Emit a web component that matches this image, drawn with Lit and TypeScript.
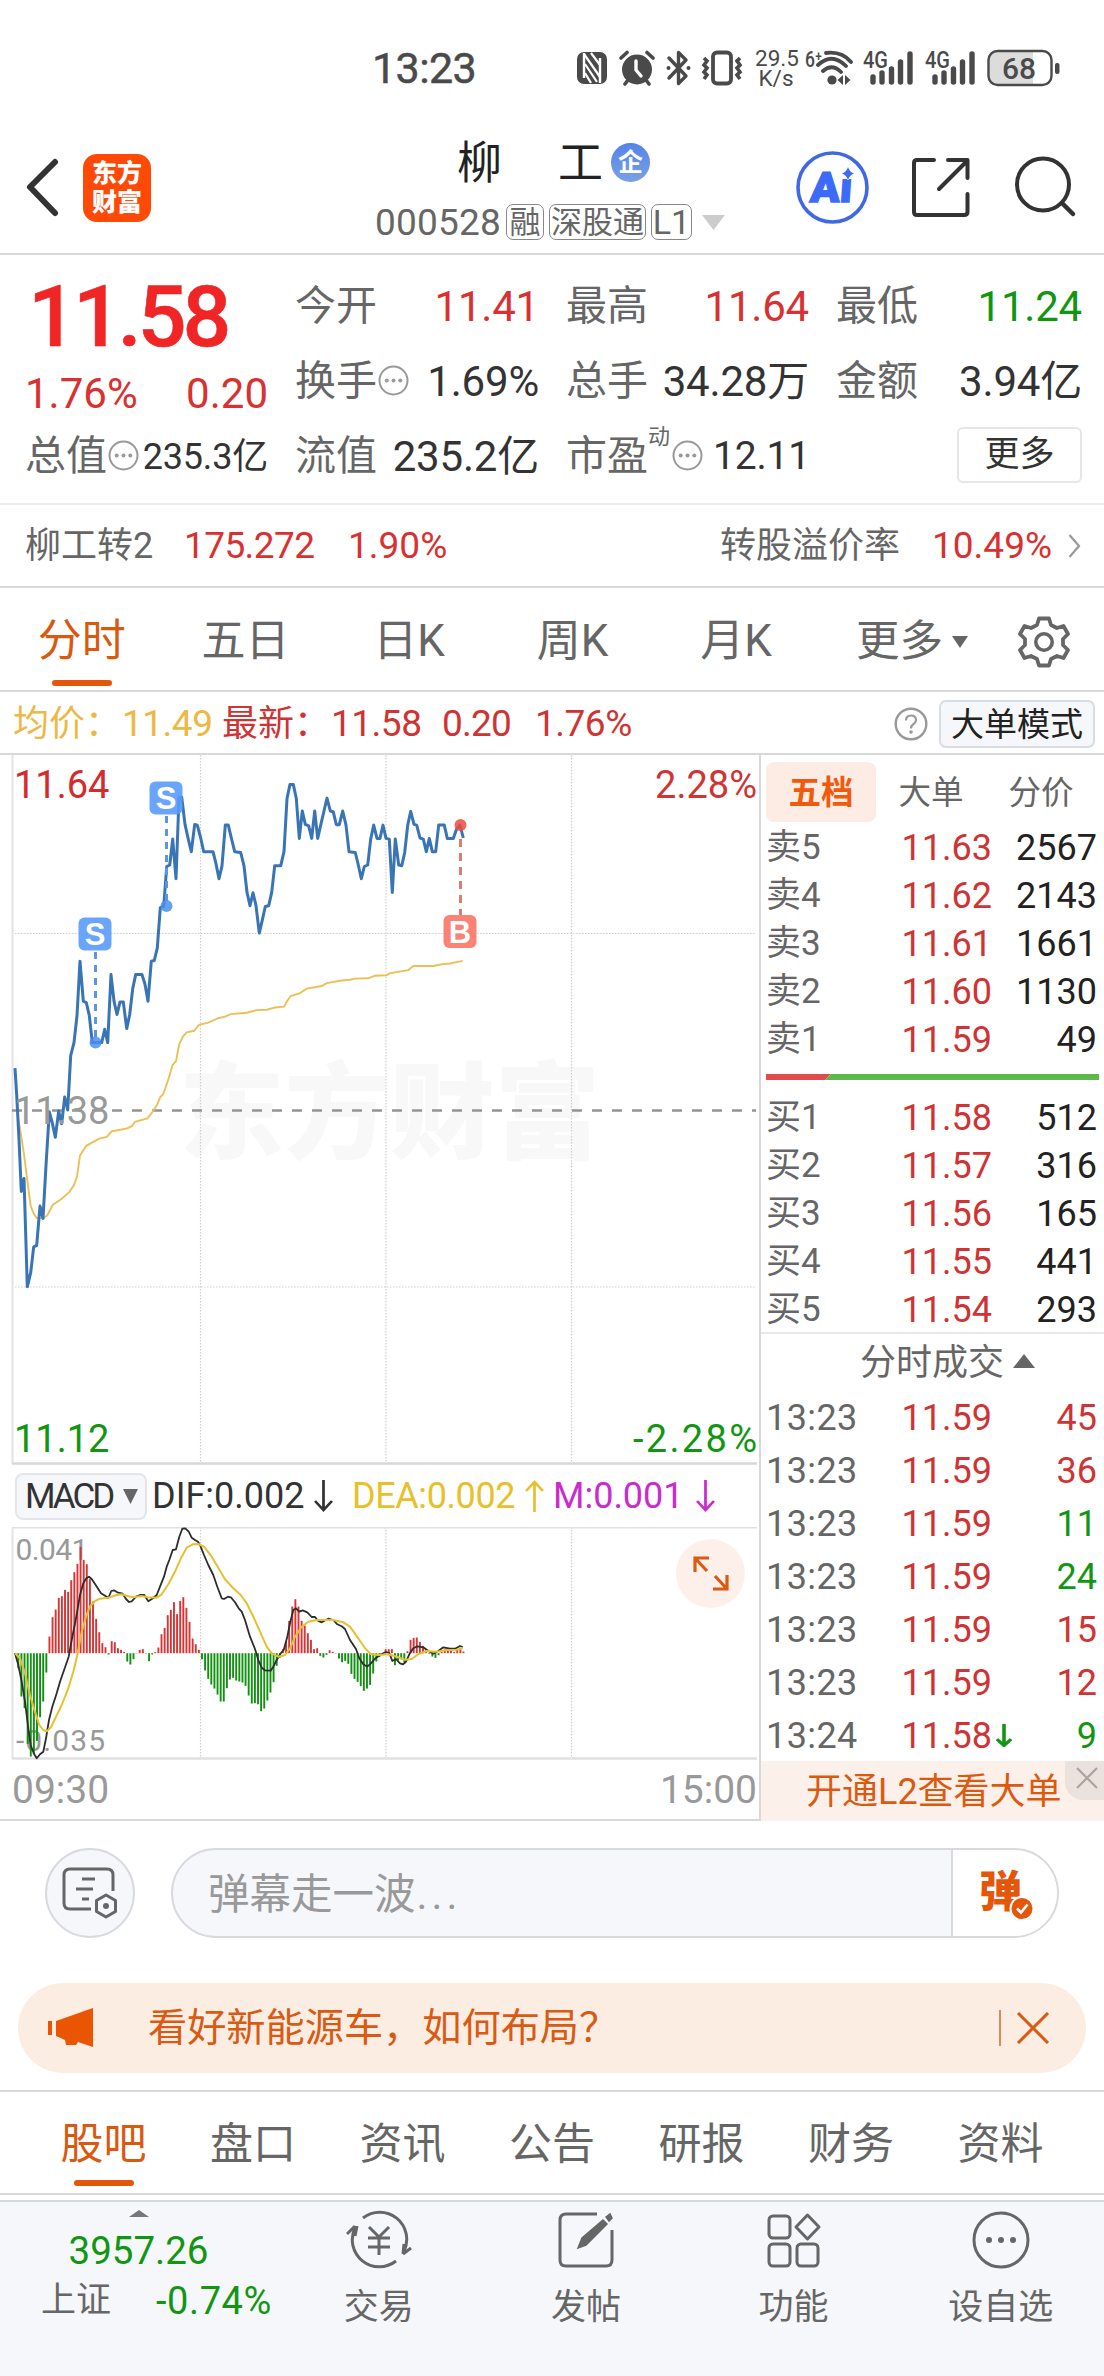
import { LitElement, html, css, svg } from "lit";
import { customElement } from "lit/decorators.js";
import { classMap } from "lit/directives/class-map.js";

const PRICE =
  "45,887 50,960 57,1080 64,1220 72,1185 82,1478 92,1440 101,1370 110,1366 120,1260 129,1293 138,1150 148,1005 157,1035 166,1074 176,1003 185,1037 194,965 203,1000 212,853 222,818 231,745 240,598 250,706 259,710 268,745 277,818 305,818 314,782 323,818 333,634 342,706 351,742 360,708 370,708 380,780 389,742 398,672 407,634 426,634 435,660 444,706 454,598 463,596 472,562 481,453 491,450 500,342 509,338 518,268 528,375 537,155 545,155 555,228 564,265 574,302 584,228 592,230 602,265 611,302 639,302 648,335 657,375 666,340 676,230 685,230 694,265 704,302 722,304 732,340 741,412 750,448 759,413 768,448 778,522 787,487 796,450 806,448 815,412 824,340 842,340 852,302 861,158 870,120 880,120 889,158 898,266 907,192 916,228 926,232 935,266 944,192 953,266 962,230 972,192 981,157 991,192 1000,194 1009,229 1018,229 1028,192 1038,230 1047,302 1066,304 1075,338 1084,375 1093,342 1103,338 1112,268 1121,230 1131,266 1140,266 1149,230 1158,266 1168,268 1177,412 1186,268 1196,338 1205,340 1214,304 1223,230 1232,193 1242,228 1250,230 1260,265 1270,268 1279,302 1288,266 1297,302 1307,302 1316,230 1333,230 1342,266 1360,266 1370,240 1380,230 1390,265";
const AVERAGE =
  "52,1010 60,1050 72,1120 82,1190 92,1260 101,1280 110,1292 130,1293 142,1285 158,1257 185,1240 208,1222 222,1203 231,1180 240,1123 259,1097 296,1078 320,1073 335,1058 380,1050 396,1043 405,1032 442,1023 454,1010 472,985 481,965 490,957 504,920 518,878 528,868 538,822 550,800 560,790 582,786 597,770 625,764 655,752 675,748 692,741 740,737 770,730 800,729 825,723 852,721 862,705 872,692 900,684 920,672 965,665 980,657 1025,650 1050,648 1065,645 1105,644 1125,637 1160,636 1168,631 1225,622 1240,611 1300,611 1325,606 1350,604 1388,597";
const DIF =
  "45,415 55,450 65,500 75,560 85,640 92,690 101,715 110,730 120,718 130,710 138,670 147,615 157,575 170,535 180,500 194,460 206,425 215,375 228,310 240,240 250,205 259,190 267,185 275,192 287,210 303,235 313,241 325,249 334,228 342,226 352,232 368,236 378,252 387,261 395,259 408,245 420,240 433,240 445,259 452,254 460,249 470,240 480,215 492,185 500,155 508,135 518,105 528,103 538,65 547,41 556,40 566,50 575,68 585,75 594,80 601,92 612,120 625,150 640,180 652,215 665,250 672,252 684,245 694,248 705,262 716,280 725,290 735,315 750,365 765,402 775,435 785,458 795,466 812,467 820,455 830,435 842,415 851,405 862,365 870,325 880,285 888,280 898,290 908,286 922,292 935,306 945,306 955,318 965,322 985,311 1000,315 1012,328 1025,334 1035,342 1050,375 1068,402 1078,430 1090,448 1102,455 1112,446 1124,432 1140,419 1158,411 1168,414 1177,438 1188,432 1200,445 1209,448 1218,440 1228,418 1240,400 1252,394 1270,397 1285,408 1300,416 1315,408 1330,397 1350,401 1365,401 1380,393 1388,396";
const DEA =
  "45,415 60,430 75,475 90,540 105,590 118,630 130,645 140,649 152,638 165,612 185,570 205,520 220,470 232,420 245,350 258,305 270,275 285,258 300,251 325,248 350,240 365,238 385,244 400,247 425,243 445,247 470,248 485,238 505,208 525,170 545,125 560,98 578,88 595,87 612,95 635,125 655,158 675,193 700,220 722,240 740,265 760,305 780,350 800,395 815,415 835,425 855,420 870,400 885,365 905,335 925,320 950,315 1000,315 1030,322 1050,335 1075,370 1095,400 1112,417 1135,420 1165,418 1190,425 1215,434 1235,432 1255,418 1280,408 1310,410 1340,405 1370,404 1388,399";
const BARS = [
  -2, -45, -130, -165, -272, -310, -300, -263, -192, -145, -58, 50, 108, 131, 166, 171, 190, 184, 219, 243, 268, 319, 280, 267, 222, 155, 103, 63, 30,
  18, -4, 36, 33, 15, 10, 4, -25, -34, -18, -1, 10, 12, -1, -24, -4, 3, 17, 57, 76, 114, 130, 153, 117, 157, 168, 136, 94, 44, 27, 10, -18, -52, -77,
  -94, -106, -124, -145, -145, -105, -79, -74, -82, -85, -88, -98, -127, -151, -150, -153, -174, -166, -142, -118, -87, -38, -14, 12, 36, 97, 140, 162,
  140, 97, 83, 60, 40, 12, 15, -8, -13, -5, 9, 4, -1, -16, -27, -23, -32, -62, -77, -86, -99, -113, -106, -95, -61, -25, -12, -3, 12, 12, 12, -36, -22,
  -18, -27, 6, 40, 46, 47, 34, 22, 12, -2, -10, -14, -6, 4, 12, 14, 12, 4, 12, 12, 5,
];

/** Converts a point list to chart pixels. */
const scale = (pts: string, sx: number, sy: number, dx: number, dy: number) =>
  pts
    .split(" ")
    .map((p) => {
      const [x, y] = p.split(",").map(Number);
      return `${(x * sx + dx).toFixed(1)},${(y * sy + dy).toFixed(1)}`;
    })
    .join(" ");

const priceLine = scale(PRICE, 1 / 3, 1 / 2.703, -12, -15);
const averageLine = scale(AVERAGE, 1 / 3, 1 / 2.703, -12, -15);
const difLine = scale(DIF, 1 / 3, 1 / 3, -12, -12);
const deaLine = scale(DEA, 1 / 3, 1 / 3, -12, -12);

const arrow = (up: boolean, w: number, h: number, sw = 2.6) => html`<svg width=${w} height=${h} viewBox="0 0 18 32" preserveAspectRatio="none">
  <path d=${up ? "M9 32V2M1 11L9 2L17 11" : "M9 0V30M1 21L9 30L17 21"} fill="none" stroke="currentColor" stroke-width=${sw} />
</svg>`;

const dots = html`<svg class="dots" width="31" height="31" viewBox="0 0 31 31">
  <circle cx="15.5" cy="15.5" r="14" fill="none" stroke="#999" stroke-width="2" />
  <circle cx="8.7" cy="15.5" r="2" fill="#999" /><circle cx="15.5" cy="15.5" r="2" fill="#999" /><circle cx="22.3" cy="15.5" r="2" fill="#999" />
</svg>`;

const signal = html`<svg width="51" height="38" viewBox="0 0 51 38">
  <text x="0" y="19" font-size="23" font-weight="500" textLength="25" lengthAdjust="spacingAndGlyphs" fill="#4a4a4a">4G</text>
  <g stroke="#4a4a4a" stroke-width="5.400" stroke-linecap="round"><path d="M10 28V33M19 24V33M28.500 20V33M37.500 13V33M47 5V33" /></g>
</svg>`;

@customElement("status-bar")
class StatusBar extends LitElement {
  static styles = css`
    :host { display: flex; height: 136px; align-items: center; color: #4a4a4a; }
    .time { width: 205px; padding-left: 372px; font-size: 43px; font-weight: 400; letter-spacing: -0.6px; -webkit-text-stroke: 0.5px #4a4a4a; }
    .icons { display: grid; grid-template-columns: 42px 47px 35px 54px 50px 58px 62px 62px 74px; align-items: center; }
    .speed { display: flex; flex-direction: column; font-size: 22.5px; line-height: 20px; text-align: center; width: 42px; }
    svg { display: block; }
  `;
  render() {
    return html`
      <span class="time">13:23</span>
      <div class="icons">
        <svg width="30" height="34" viewBox="0 0 30 34">
          <rect x="0" y="1" width="30" height="32" rx="7" fill="#4a4a4a" />
          <path d="M7 2V27M23 7V32" stroke="#fff" stroke-width="2.400" />
          <path d="M7 3L23 26M8 13L20 31M8 22L14 32M14 2L23 14" stroke="#fff" stroke-width="2.200" />
        </svg>
        <svg width="36" height="36" viewBox="0 0 36 36">
          <circle cx="18" cy="19.500" r="15" fill="#4a4a4a" />
          <path d="M2 8L8 2.500M34 8L28 2.500M6 34L9 30M30 34L27 30" stroke="#4a4a4a" stroke-width="3.600" stroke-linecap="round" />
          <path d="M17 11V20L22 26" stroke="#fff" stroke-width="3.400" fill="none" stroke-linecap="round" />
        </svg>
        <svg width="25" height="36" viewBox="0 0 25 36">
          <path d="M3 8L20 26L12.500 33.500V2.500L20 10L3 28" fill="none" stroke="#4a4a4a" stroke-width="3.400" stroke-linejoin="round" stroke-linecap="round" />
          <circle cx="2.500" cy="18" r="2" fill="#4a4a4a" /><circle cx="22.500" cy="18" r="2" fill="#4a4a4a" />
        </svg>
        <svg width="42" height="36" viewBox="0 0 42 36">
          <rect x="12" y="2.500" width="18" height="31" rx="4" fill="none" stroke="#4a4a4a" stroke-width="3.800" />
          <path d="M3 8L6 11L3 15L6 18L3 22L6 25L3 29M39 8L36 11L39 15L36 18L39 22L36 25L39 29" fill="none" stroke="#4a4a4a" stroke-width="3.600" />
        </svg>
        <div class="speed"><span>29.5</span><span>K/s</span></div>
        <svg width="50" height="38" viewBox="0 0 50 38">
          <text x="0" y="18" font-size="22" font-weight="500" textLength="17" lengthAdjust="spacingAndGlyphs" fill="#4a4a4a">6⁺</text>
          <g fill="none" stroke="#4a4a4a" stroke-width="3.800" stroke-linecap="round"><path d="M21 4Q37 2 46 13M13 16Q27 3 41 17M18 22Q27 14 36 23" /></g>
          <circle cx="27" cy="31" r="4.600" fill="#4a4a4a" />
          <path d="M38 26V36L32.500 31ZM40 26V36L45.500 31Z" fill="#4a4a4a" />
        </svg>
        ${signal}${signal}
        <svg width="74" height="38" viewBox="0 0 74 38">
          <path d="M10 2H46V36H10Q2 36 2 28V10Q2 2 10 2Z" fill="#dcdcdc" />
          <rect x="1.500" y="2" width="63" height="34" rx="9" fill="none" stroke="#4a4a4a" stroke-width="2.400" />
          <rect x="68" y="14" width="4.500" height="11" rx="2" fill="#4a4a4a" />
          <text x="32" y="29.500" font-size="30" font-weight="500" text-anchor="middle" fill="#4a4a4a">68</text>
        </svg>
      </div>
    `;
  }
}

@customElement("title-bar")
class TitleBar extends LitElement {
  static styles = css`
    :host { display: grid; grid-template-columns: 59px 68px 224px 421px 116px 101px 67px; padding-left: 24px; border-bottom: 2px solid #d8d8d8; box-sizing: border-box; height: 119px; }
    svg { display: block; margin-top: 15px; }
    .logo { margin-top: 18px; width: 68px; height: 68px; border-radius: 14px; background: #ff4a07; color: #fff; font-size: 25px; line-height: 29px; font-weight: 900; text-align: center; padding-top: 5px; box-sizing: border-box; }
    .mid { grid-column: 4; }
    .name { display: flex; align-items: center; height: 54px; padding-left: 82px; font-size: 45px; color: #222; gap: 56px; }
    .badge { margin: -2px 0 0 -48px; width: 39px; height: 39px; border-radius: 50%; background: linear-gradient(#5483ea, #7ba0e2); color: #fff; font-size: 25px; font-weight: 700; line-height: 39px; text-align: center; }
    .code { display: flex; align-items: center; height: 64px; font-size: 37px; color: #666; }
    .num { width: 131px; letter-spacing: 0.2px; }
    .tag { border: 1.5px solid #888; border-radius: 7px; height: 36px; box-sizing: border-box; line-height: 35px; font-size: 31px; text-align: center; margin-right: 5px; width: 38px; }
    .tag.wide { width: 97px; }
    .tag.l1 { width: 41px; margin-right: 10px; font-size: 34px; line-height: 34px; }
    .tri { margin: 0; }
  `;
  render() {
    return html`
      <svg width="40" height="72" viewBox="0 0 40 72"><path d="M31 11L6 36L31 62" fill="none" stroke="#333" stroke-width="6" stroke-linecap="round" stroke-linejoin="round" /></svg>
      <div class="logo">东方<br />财富</div>
      <div class="mid">
        <div class="name"><span>柳</span><span>工</span><span class="badge">企</span></div>
        <div class="code">
          <span class="num">000528</span><span class="tag">融</span><span class="tag wide">深股通</span><span class="tag l1">L1</span>
          <svg class="tri" width="23" height="15"><path d="M0 0H23L11.500 15Z" fill="#ccc" /></svg>
        </div>
      </div>
      <svg width="73" height="73" viewBox="0 0 73 73">
        <circle cx="36.500" cy="36.500" r="34.500" fill="none" stroke="#4068e4" stroke-width="3.600" />
        <text x="14" y="51" font-size="42" font-weight="900" fill="#3c6bfa" stroke="#3c6bfa" stroke-width="1.500" textLength="42" lengthAdjust="spacingAndGlyphs" transform="skewX(-4) translate(3 0)">Aı</text>
        <path d="M52 16Q53.500 21 58 22.500Q53.500 24 52 29Q50.500 24 46 22.500Q50.500 21 52 16Z" fill="#3c6bfa" stroke="#fff" stroke-width="1" paint-order="stroke" />
      </svg>
      <svg width="60" height="73" viewBox="0 0 60 73">
        <path d="M22 9H5Q2 9 2 12V61Q2 64 5 64H52Q55.500 64 55.500 61V43M36 9H55.500V27M55 10L27 38" fill="none" stroke="#333" stroke-width="4" stroke-linecap="round" stroke-linejoin="round" />
      </svg>
      <svg width="64" height="73" viewBox="0 0 64 73"><circle cx="30" cy="33.500" r="26" fill="none" stroke="#333" stroke-width="4" /><path d="M49 52L60 63" stroke="#333" stroke-width="4.500" stroke-linecap="round" /></svg>
    `;
  }
}

@customElement("quote-panel")
class QuotePanel extends LitElement {
  static styles = css`
    :host { display: block; }
    .grid { display: grid; grid-template-columns: 243px 244px 243px 246px; column-gap: 27px; height: 250px; box-sizing: border-box; padding: 14px 23px 0 25px; border-bottom: 2px solid #ededed; }
    .cell { display: flex; align-items: center; justify-content: space-between; height: 75px; font-size: 42px; color: #333; white-space: nowrap; }
    .label { display: flex; align-items: center; font-size: 41px; color: #666; }
    .v { letter-spacing: -0.2px; }
    .red { color: #d93031; }
    .green { color: #119612; }
    .big { height: 100px; line-height: 96px; font-size: 86px; font-weight: 500; color: #f02525; letter-spacing: -4px; padding-left: 3px; -webkit-text-stroke: 0.6px #f02525; }
    .chg { height: 50px; }
    .dots { margin-left: 1px; margin-top: -3px; }
    .mid { font-size: 36px; }
    .pe { font-size: 39px; margin-right: -1px; }
    .sup { font-size: 22px; align-self: flex-start; margin-top: -10px; width: 23px; }
    .more { margin: -3px 0 0 auto; width: 125px; height: 56px; box-sizing: border-box; border: 2px solid #e6e6e6; border-radius: 6px; line-height: 52px; text-align: center; font-size: 35px; }
    .bond { display: flex; align-items: center; height: 83px; padding: 0 23px 0 25px; font-size: 36px; color: #666; border-bottom: 2px solid #d8d8d8; box-sizing: border-box; white-space: nowrap; }
    .b1 { width: 159px; } .b2 { width: 164px; letter-spacing: -0.6px; } .b3 { flex: 1; } .b4 { width: 212px; } .b5 { width: 136px; }
    .b2, .b3, .b5 { font-size: 37px; }
  `;
  render() {
    const cell = (l: unknown, v: string, c = "") => html`<div class="cell"><span class="label">${l}</span><span class="v ${c}">${v}</span></div>`;
    return html`
      <div class="grid">
        <div>
          <div class="big">11.58</div>
          <div class="cell chg red"><span>1.76%</span><span>0.20</span></div>
          ${cell(html`总值${dots}`, "235.3亿", "mid")}
        </div>
        <div>${cell("今开", "11.41", "red")}${cell(html`换手${dots}`, "1.69%")}${cell("流值", "235.2亿")}</div>
        <div>${cell("最高", "11.64", "red")}${cell("总手", "34.28万")}${cell(html`市盈<span class="sup">动</span>${dots}`, "12.11", "pe")}</div>
        <div>${cell("最低", "11.24", "green")}${cell("金额", "3.94亿")}<div class="cell"><span class="more">更多</span></div></div>
      </div>
      <div class="bond">
        <span class="b1">柳工转2</span><span class="b2 red">175.272</span><span class="b3 red">1.90%</span><span class="b4">转股溢价率</span><span class="b5 red">10.49%</span>
        <svg width="13" height="24" viewBox="0 0 13 24"><path d="M1.500 1L11 12L1.500 23" fill="none" stroke="#999" stroke-width="2.200" /></svg>
      </div>
    `;
  }
}

@customElement("period-tabs")
class PeriodTabs extends LitElement {
  static styles = css`
    :host { display: block; }
    .tabs { display: grid; grid-template-columns: repeat(5, 163.6px) 1fr; height: 104px; box-sizing: border-box; border-bottom: 2px solid #d8d8d8; font-size: 44px; color: #666; }
    .tab { display: flex; flex-direction: column; align-items: center; height: 102px; line-height: 107px; position: relative; }
    .on { color: #d9590f; }
    .on::after { content: ""; position: absolute; bottom: 4px; width: 60px; height: 6px; border-radius: 3px; background: #e4570b; }
    .end { display: flex; align-items: center; padding: 3px 0 0 38px; box-sizing: border-box; font-size: 43.5px; height: 104px; }
    .tri { margin: 0 50px 0 9px; }
    .info { display: flex; align-items: center; height: 63px; box-sizing: border-box; border-bottom: 2px solid #d8d8d8; padding: 2px 9px 0 13px; font-size: 37px; white-space: nowrap; color: #d03334; }
    .lab { font-size: 36px; width: 109px; }
    .avg { color: #edb846; }
    .a { width: 100px; letter-spacing: -0.5px; } .b { width: 111px; letter-spacing: -0.5px; } .c { width: 93px; letter-spacing: -0.8px; } .d { flex: 1; letter-spacing: -0.5px; }
    .mode { width: 156px; height: 48px; box-sizing: border-box; border: 2px solid #d9dce2; border-radius: 7px; background: #f6f7fa; color: #222; font-size: 33px; line-height: 45px; text-align: center; margin-left: 11px; }
  `;
  render() {
    return html`
      <div class="tabs">
        ${["分时", "五日", "日K", "周K", "月K"].map((t, i) => html`<span class=${classMap({ tab: true, on: i === 0 })}>${t}</span>`)}
        <span class="end">更多
          <svg class="tri" width="16" height="12"><path d="M0 0H16L8 12Z" fill="#666" /></svg>
          <svg width="52" height="52" viewBox="-26 -26 52 52">
            <path d="M-5 -23.500H5L7 -17L13 -14L19.500 -16L24 -8L19 -3V3L24 8L19.500 16L13 14L7 17L5 23.500H-5L-7 17L-13 14L-19.500 16L-24 8L-19 3V-3L-24 -8L-19.500 -16L-13 -14L-7 -17Z" fill="none" stroke="#666" stroke-width="3.800" stroke-linejoin="round" />
            <circle r="8.200" fill="none" stroke="#666" stroke-width="3.600" />
          </svg>
        </span>
      </div>
      <div class="info">
        <span class="lab avg">均价：</span><span class="a avg">11.49</span><span class="lab">最新：</span><span class="b">11.58</span><span class="c">0.20</span><span class="d">1.76%</span>
        <svg width="34" height="34" viewBox="0 0 34 34"><circle cx="17" cy="17" r="15.300" fill="none" stroke="#999" stroke-width="2.400" /><path d="M12 13.500Q12 8.500 17 8.500T22 13.300Q22 15.500 19 17.500Q17 19 17 21.500" fill="none" stroke="#999" stroke-width="2.200" /><circle cx="17" cy="25" r="1.800" fill="#999" /></svg>
        <span class="mode">大单模式</span>
      </div>
    `;
  }
}

@customElement("minute-chart")
class MinuteChart extends LitElement {
  static styles = css`
    :host { display: block; width: 759px; box-sizing: border-box; }
    .plot { display: block; }
    .indicator { display: flex; align-items: center; height: 62px; padding-left: 15px; font-size: 36px; color: #333; white-space: nowrap; }
    .pick { display: flex; align-items: center; width: 132px; height: 47px; box-sizing: border-box; border: 2px solid #e3e5ea; border-radius: 8px; background: #f6f7fa; padding-left: 8px; margin-right: 5px; }
    .macd { font-size: 35px; letter-spacing: -3px; width: 98px; }
    .dif { display: flex; align-items: center; gap: 10px; width: 200px; }
    .dea { display: flex; align-items: center; gap: 10px; width: 201px; color: #e8c02b; letter-spacing: -0.4px; }
    .m { display: flex; align-items: center; gap: 12px; color: #ca2bce; }
    .axis { display: flex; justify-content: space-between; align-items: center; height: 59px; padding: 2px 2px 0 12px; box-sizing: border-box; font-size: 39px; color: #999; }
  `;
  render() {
    const grid = (h: number) => svg`<path d=${`M188.500 0V${h}M374 0V${h}M559.500 0V${h}`} stroke="#cfcfcf" stroke-width="1.200" stroke-dasharray="1.500 1.500" />`;
    const marker = (x: number, y: number, t: string, c: string) => svg`
      <rect x=${x} y=${y} width="33" height="33" rx="6" fill=${c} fill-opacity="0.9" />
      <text x=${x + 16.5} y=${y + 27.5} font-size="31" font-weight="700" font-family="Liberation Sans, sans-serif" fill="#fff" text-anchor="middle">${t}</text>`;
    return html`
      <svg class="plot" width="758" height="710" viewBox="-12 0 758 710">
        <text x="167" y="395" font-size="105" font-weight="900" fill="#f8f8f8" textLength="421">东方财富</text>
        ${grid(709)}
        <path d="M0 178.500H744M0 532H744" stroke="#cfcfcf" stroke-width="1.200" stroke-dasharray="1.500 1.500" />
        <path d="M0.500 0V709" stroke="#e3e3e3" stroke-width="2" /><path d="M0 708.500H745" stroke="#d8d8d8" stroke-width="2.500" />
        <path d="M0 355.500H744" stroke="#949494" stroke-width="2.400" stroke-dasharray="10 10" />
        <polyline points=${averageLine} fill="none" stroke="#ecc055" stroke-width="1.900" />
        <polyline points=${priceLine} fill="none" stroke="#3974b4" stroke-width="3" stroke-linejoin="round" />
        <text x="2" y="368.500" font-size="38" fill="#999">11.38</text>
        <text x="2" y="43" font-size="38" fill="#d42b2c">11.64</text>
        <text x="745" y="43" font-size="38" fill="#d03334" text-anchor="end">2.28%</text>
        <text x="2" y="697" font-size="38" fill="#119612">11.12</text>
        <text x="621" y="697" font-size="38" fill="#119612" textLength="124">-2.28%</text>
        <path d="M83.500 197V284M154.500 61V148" stroke="#5b95e6" stroke-width="3" stroke-dasharray="7 6" />
        <path d="M448.500 84V160" stroke="#e07b70" stroke-width="3" stroke-dasharray="8 6" />
        <circle cx="83.500" cy="287.500" r="6" fill="#4b8ff0" fill-opacity=".85" /><circle cx="154.500" cy="151" r="6" fill="#4b8ff0" fill-opacity=".85" /><circle cx="448.500" cy="70" r="6" fill="#ee4b3e" fill-opacity=".85" />
        ${marker(66.5, 162.5, "S", "#599bfb")}${marker(137.5, 26.5, "S", "#599bfb")}${marker(431.5, 160, "B", "#fb7566")}
      </svg>
      <div class="indicator">
        <span class="pick"><span class="macd">MACD</span><svg width="15" height="15"><path d="M0 0H15L7.500 15Z" fill="#666" /></svg></span>
        <span class="dif">DIF:0.002${arrow(false, 19, 32)}</span><span class="dea">DEA:0.002${arrow(true, 19, 32)}</span><span class="m">M:0.001${arrow(false, 19, 32)}</span>
      </div>
      <svg class="plot" width="758" height="233" viewBox="-12 0 758 233">
        ${grid(232)}
        <path d="M0 0.750H745" stroke="#e0e0e0" stroke-width="1.500" /><path d="M0.500 0V232" stroke="#e3e3e3" stroke-width="2" /><path d="M0 231.500H745" stroke="#e0e0e0" stroke-width="2.500" />
        <text x="3.500" y="32.500" font-size="30" fill="#999" letter-spacing="-0.600">0.041</text>
        <text x="4" y="223.500" font-size="30" fill="#999" textLength="89">-0.035</text>
        ${BARS.map((v, i) => svg`<rect x=${3.2 + i * 3.113 - 0.95} y=${126.2 - Math.max(v, 0) / 3} width="1.9" height=${Math.abs(v) / 3} fill=${v > 0 ? "#d83434" : "#129012"} />`)}
        <polyline points=${difLine} fill="none" stroke="#2d2d2d" stroke-width="1.800" stroke-linejoin="round" />
        <polyline points=${deaLine} fill="none" stroke="#e6c032" stroke-width="2" stroke-linejoin="round" />
        <circle cx="698.500" cy="46.500" r="34.500" fill="#fdf0ea" />
        <path d="M683 45V31H697M683 31L695 44M715 48V62H701M715 62L703 49" fill="none" stroke="#d95a12" stroke-width="3.200" />
      </svg>
      <div class="axis"><span>09:30</span><span>15:00</span></div>
    `;
  }
}

@customElement("order-book")
class OrderBook extends LitElement {
  static styles = css`
    :host { display: block; flex: 1; border-left: 2px solid #d8d8d8; box-sizing: border-box; font-size: 36px; color: #222; white-space: nowrap; }
    .tabs { display: flex; height: 74px; align-items: center; font-size: 32.5px; color: #666; padding: 0 0 0 5px; box-sizing: border-box; }
    .tab { width: 110px; height: 60px; line-height: 62px; text-align: center; border-radius: 8px; }
    .on { background: #fdece4; color: #f15a0c; font-weight: 700; }
    .row { display: grid; grid-template-columns: 100px 126px 1fr; height: 48px; align-items: center; padding: 0 7px 0 5px; }
    .row > * + * { text-align: right; }
    .l { color: #666; } .red { color: #d03334; } .green { color: #119612; }
    .l.book { font-size: 35px; line-height: 38px; }
    .bar { display: block; margin: 10px 0 14px 5px; }
    .sells { margin-top: -5px; }
    .head { display: flex; height: 60px; margin-top: -2px; box-sizing: border-box; border-top: 2px solid #e8e8e8; justify-content: center; align-items: center; gap: 9px; padding-left: 30px; color: #666; }
    .head svg { margin-top: -5px; }
    .ticks { margin-top: -1px; }
    .tick { height: 53px; }
    .tick .l { letter-spacing: 0.4px; }
    .price { position: relative; }
    .price svg { position: absolute; left: 103%; top: 6px; color: #119612; }
    .l2 { display: flex; height: 60px; background: #fcf0ea; color: #dc5a10; margin-top: -1px; justify-content: space-between; padding-left: 45px; line-height: 62px; }
    .close { width: 39px; height: 39px; background: #ebe2de; border-radius: 0 0 0 18px; display: flex; align-items: center; justify-content: center; box-sizing: border-box; padding: 0 0 5px 5px; }
  `;
  render() {
    const rows = (side: string, data: [number, string, string][]) =>
      data.map(([n, p, q]) => html`<div class="row"><span class="l book">${side}${n}</span><span class="red">${p}</span><span>${q}</span></div>`);
    const ticks: [string, string, string, string][] = [
      ["13:23", "11.59", "45", "red"], ["13:23", "11.59", "36", "red"], ["13:23", "11.59", "11", "green"], ["13:23", "11.59", "24", "green"],
      ["13:23", "11.59", "15", "red"], ["13:23", "11.59", "12", "red"], ["13:24", "11.58", "9", "green"],
    ];
    return html`
      <div class="tabs"><span class="tab on">五档</span><span class="tab">大单</span><span class="tab">分价</span></div>
      <div class="sells">${rows("卖", [[5, "11.63", "2567"], [4, "11.62", "2143"], [3, "11.61", "1661"], [2, "11.60", "1130"], [1, "11.59", "49"]])}</div>
      <svg class="bar" width="333" height="6"><path d="M0 0H65L59 6H0Z" fill="#e14b4e" /><path d="M65 0H333V6H59Z" fill="#5fb84b" /></svg>
      ${rows("买", [[1, "11.58", "512"], [2, "11.57", "316"], [3, "11.56", "165"], [4, "11.55", "441"], [5, "11.54", "293"]])}
      <div class="head">分时成交<svg width="22" height="14"><path d="M0 14L11 0L22 14Z" fill="#666" /></svg></div>
      <div class="ticks">
        ${ticks.map(([t, p, q, c], i) => html`<div class="row tick"><span class="l">${t}</span><span class="price"><span class="red">${p}</span>${i === 6 ? arrow(false, 16, 23, 4) : ""}</span><span class=${c}>${q}</span></div>`)}
      </div>
      <div class="l2">开通L2查看大单<span class="close"><svg width="22" height="22"><path d="M1 1L21 21M21 1L1 21" stroke="#aaa3a0" stroke-width="2.200" /></svg></span></div>
    `;
  }
}

@customElement("comment-area")
class CommentArea extends LitElement {
  static styles = css`
    :host { display: block; border-top: 2px solid #d8d8d8; }
    .say { display: flex; padding: 27px 45px 0; gap: 36px; }
    .set { width: 90px; height: 90px; box-sizing: border-box; border: 2px solid #d8dade; border-radius: 50%; background: #f6f7fa; display: flex; align-items: center; justify-content: center; }
    .field { flex: 1; display: flex; height: 90px; box-sizing: border-box; border: 2px solid #d8dade; border-radius: 45px; background: #f6f7fa; overflow: hidden; font-size: 41.5px; line-height: 89px; color: #999; }
    .hint { flex: 1; padding-left: 35px; }
    .ell { letter-spacing: 4px; margin-left: 1px; }
    .dan { width: 106px; border-left: 2px solid #d8dade; background: #fff; display: flex; align-items: center; padding-left: 26px; box-sizing: border-box; }
    .notice { display: flex; align-items: center; height: 90px; margin: 45px 18px 0; border-radius: 45px; background: #fcede3; color: #d95a12; font-size: 39.2px; line-height: 42px; padding: 0 36px 0 30px; box-sizing: border-box; }
    .msg { flex: 1; padding-left: 55px; }
    .sep { width: 2px; height: 36px; background: #d98a5e; margin-right: 15px; }
    .tabs { display: grid; grid-template-columns: repeat(7, 149.5px); justify-content: center; height: 105px; margin-top: 17px; box-sizing: border-box; border-top: 2px solid #d8d8d8; border-bottom: 2px solid #d8d8d8; font-size: 43px; color: #666; }
    .tab { display: flex; justify-content: center; line-height: 105px; position: relative; height: 101px; }
    .on { color: #d9590f; }
    .on::after { content: ""; position: absolute; bottom: 7px; width: 60px; height: 6px; border-radius: 3px; background: #e4570b; }
  `;
  render() {
    return html`
      <div class="say">
        <span class="set"><svg width="56" height="54" viewBox="0 0 56 54">
          <path d="M51 25V9Q51 3 45 3H8Q2 3 2 9V37Q2 43 8 43H29M20 13H33M14 23H31M20 33H27" fill="none" stroke="#666" stroke-width="3" />
          <path d="M44 29L53.500 34.500V45.500L44 51L34.500 45.500V34.500Z" fill="none" stroke="#666" stroke-width="3" stroke-linejoin="round" /><circle cx="44" cy="40" r="3" fill="#666" />
        </svg></span>
        <div class="field"><span class="hint">弹幕走一波<span class="ell">...</span></span><span class="dan"><svg width="56" height="56" viewBox="0 0 56 56">
          <text x="0" y="42" font-size="43" font-weight="900" fill="#e4570b">弹</text>
          <circle cx="43" cy="43.500" r="12.500" fill="#fff" /><circle cx="43" cy="43.500" r="10.500" fill="#e4570b" /><path d="M38 43.500L42 47.500L48.500 39.500" fill="none" stroke="#fff" stroke-width="2.600" />
        </svg></span></div>
      </div>
      <div class="notice">
        <svg width="45" height="40" viewBox="0 0 45 40"><path d="M0 13H4V27H0ZM8 13L45 0V39L30 34L28 37H18L17 32L8 28Z" fill="#ea5504" /></svg>
        <span class="msg">看好新能源车，如何布局？</span><span class="sep"></span>
        <svg width="34" height="32" viewBox="0 0 34 32"><path d="M2 1L32 31M32 1L2 31" stroke="#d95a12" stroke-width="3" /></svg>
      </div>
      <div class="tabs">${["股吧", "盘口", "资讯", "公告", "研报", "财务", "资料"].map((t, i) => html`<span class=${classMap({ tab: true, on: i === 0 })}>${t}</span>`)}</div>
    `;
  }
}

@customElement("bottom-bar")
class BottomBar extends LitElement {
  static styles = css`
    :host { display: grid; grid-template-columns: 275px repeat(4, 207.4px); height: 176px; margin-top: 5px; background: #f6f7fa; border-top: 2px solid #d8d8d8; box-sizing: border-box; color: #666; font-size: 35px; }
    .index { display: flex; flex-direction: column; align-items: center; padding: 8px 0 0 2px; }
    .v { font-size: 38.5px; color: #119612; line-height: 68px; }
    .sub { display: flex; align-self: stretch; padding: 0 3px 0 39px; justify-content: space-between; line-height: 32px; white-space: nowrap; }
    .neg { color: #119612; font-size: 38px; letter-spacing: 0.6px; }
    .item { display: flex; flex-direction: column; align-items: center; padding-top: 8px; line-height: 76px; }
    svg { display: block; flex: none; }
  `;
  render() {
    const item = (icon: unknown, t: string) => html`<div class="item"><svg width="66" height="60" viewBox="-33 -30 66 60" fill="none" stroke="#666" stroke-width="3">${icon}</svg>${t}</div>`;
    return html`
      <div class="index">
        <svg width="20" height="7"><path d="M0 7L10 0L20 7Z" fill="#777" /></svg>
        <span class="v">3957.26</span>
        <span class="sub"><span>上证</span><span class="neg">-0.74%</span></span>
      </div>
      ${item(svg`<path d="M-16 -22A27 27 0 0 1 25 11M17 21A27 27 0 0 1 -24 -12M24 14L32 8M25 4L24 14M-24 -14L-32 -6M-22 -14L-24 -4" /><path d="M-10 -13L0 -3L10 -13M0 -3V15M-11 -2H11M-11 7H11" />`, "交易")}
      ${item(svg`<path d="M11 -26H-20Q-26 -26 -26 -20V20Q-26 26 -20 26H20Q26 26 26 20V-10" /><path d="M-8 8L-4 -2L17 -20L21 -16L0 5Z M20 -23L24 -26L26 -22L23 -19Z" fill="#666" stroke-width="1.500" />`, "发帖")}
      ${item(svg`<rect x="-24" y="-24" width="21" height="22" rx="4" /><rect x="-24" y="4" width="21" height="22" rx="4" /><rect x="4" y="4" width="21" height="22" rx="4" /><path d="M14.500 -25L26 -13L14.500 -1L3 -13Z" stroke-linejoin="round" />`, "功能")}
      ${item(svg`<circle r="27" /><g fill="#666" stroke="none"><circle cx="-12" r="3" /><circle r="3" /><circle cx="12" r="3" /></g>`, "设自选")}
    `;
  }
}

@customElement("app-root")
class AppRoot extends LitElement {
  static styles = css`
    :host { display: block; width: 1104px; height: 2376px; overflow: hidden; background: #fff; font-family: Roboto, "Noto Sans CJK SC", sans-serif; line-height: 1; }
    .market { display: flex; height: 1064px; }
  `;
  render() {
    return html`
      <status-bar></status-bar>
      <title-bar></title-bar>
      <quote-panel></quote-panel>
      <period-tabs></period-tabs>
      <div class="market"><minute-chart></minute-chart><order-book></order-book></div>
      <comment-area></comment-area>
      <bottom-bar></bottom-bar>
    `;
  }
}
